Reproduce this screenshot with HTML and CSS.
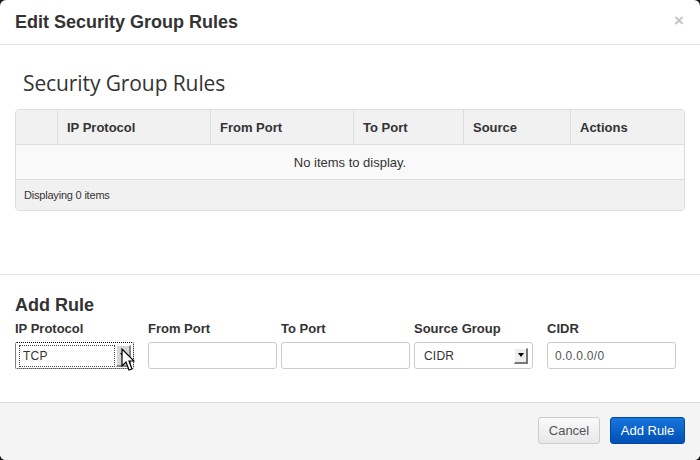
FILE: index.html
```html
<!DOCTYPE html>
<html>
<head>
<meta charset="utf-8">
<link rel="stylesheet" href="styles.css">
</head>
<body>
<div class="modal">
  <div class="modal-header">
    <h2 class="modal-title">Edit Security Group Rules</h2>
    <span class="close">×</span>
  </div>
  <div class="modal-body">
    <h3 class="section-title">Security Group Rules</h3>
    <div class="table-wrap">
      <table class="rules">
        <thead>
          <tr>
            <th class="c0"></th>
            <th class="c1">IP Protocol</th>
            <th class="c2">From Port</th>
            <th class="c3">To Port</th>
            <th class="c4">Source</th>
            <th class="c5">Actions</th>
          </tr>
        </thead>
        <tbody>
          <tr class="empty"><td colspan="6">No items to display.</td></tr>
        </tbody>
        <tfoot>
          <tr><td colspan="6">Displaying 0 items</td></tr>
        </tfoot>
      </table>
    </div>
  </div>
  <div class="add-rule">
    <h3 class="add-title">Add Rule</h3>
    <div class="fields">
      <div class="field">
        <label>IP Protocol</label>
        <div class="select focused">
          <span class="sel-text">TCP</span>
          <span class="sel-btn dark"><span class="tri"></span></span>
        </div>
      </div>
      <div class="field">
        <label>From Port</label>
        <div class="input"></div>
      </div>
      <div class="field">
        <label>To Port</label>
        <div class="input"></div>
      </div>
      <div class="field">
        <label>Source Group</label>
        <div class="select plain">
          <span class="sel-text">CIDR</span>
          <span class="sel-btn"><span class="tri"></span></span>
        </div>
      </div>
      <div class="field">
        <label>CIDR</label>
        <div class="input"><span class="val">0.0.0.0/0</span></div>
      </div>
    </div>
    <svg class="cursor" width="14" height="24" viewBox="0 0 14 24">
      <path d="M1 1 L1 18 L5 14 L8 22 L11 21 L8 13 L13 13 Z" fill="#fff" stroke="#000" stroke-width="1.2" stroke-linejoin="miter"/>
    </svg>
  </div>
  <div class="modal-footer">
    <button class="btn btn-cancel">Cancel</button>
    <button class="btn btn-primary">Add Rule</button>
  </div>
</div>
</body>
</html>
```
FILE: styles.css
```css
html, body {
  margin: 0;
  padding: 0;
  background: #1a1a1a;
}
body {
  font-family: "Liberation Sans", Arial, sans-serif;
  color: #333;
  font-size: 13px;
}
.modal {
  width: 700px;
  height: 460px;
  background: #fff;
  border-radius: 6px;
  overflow: hidden;
  display: flex;
  flex-direction: column;
  position: relative;
}
.modal-header {
  height: 45px;
  box-sizing: border-box;
  border-bottom: 1px solid #e5e5e5;
  display: flex;
  align-items: center;
  justify-content: space-between;
  padding: 0 15px 0 15px;
}
.modal-title {
  margin: 0;
  font-size: 18px;
  font-weight: bold;
  color: #333;
  line-height: 20px;
}
.close {
  color: #c4c4c4;
  font-size: 17px;
  font-weight: bold;
  margin-right: 1px;
  margin-top: -2px;
}
.modal-body {
  padding: 0 15px;
  height: 230px;
  box-sizing: border-box;
  border-bottom: 1px solid #e5e5e5;
}
.section-title {
  font-family: "Open Sans", sans-serif;
  font-weight: normal;
  font-size: 21px;
  color: #333;
  margin: 0;
  padding: 24px 0 0 8px;
  height: 40px;
  line-height: 28px;
  letter-spacing: -0.1px;
}
.table-wrap {
  border: 1px solid #ddd;
  border-radius: 4px;
  overflow: hidden;
}
.rules {
  width: 100%;
  border-collapse: collapse;
  table-layout: fixed;
}
.rules th {
  background: #f1f1f1;
  height: 34px;
  padding: 0 9px;
  text-align: left;
  font-size: 13px;
  font-weight: bold;
  border-left: 1px solid #ddd;
  border-bottom: 1px solid #ddd;
}
.rules th.c0 { border-left: none; width: 23px; }
.rules th.c1 { width: 134px; }
.rules th.c2 { width: 124px; }
.rules th.c3 { width: 91px; }
.rules th.c4 { width: 88px; }
.rules .empty td {
  background: #f9f9f9;
  height: 34px;
  text-align: center;
  font-size: 13px;
  border-bottom: 1px solid #ddd;
  padding: 0;
}
.rules tfoot td {
  background: #f1f1f1;
  height: 30px;
  padding: 0 8px;
  font-size: 11px;
  letter-spacing: -0.2px;
}
.add-rule {
  padding: 19px 15px 0 15px;
  flex: 1;
  position: relative;
}
.add-title {
  margin: 0;
  font-size: 18px;
  font-weight: bold;
  line-height: 22px;
  color: #333;
}
.fields {
  display: flex;
  gap: 4px;
  margin-top: 5px;
}
.field {
  width: 129px;
  display: flex;
  flex-direction: column;
}
.field label {
  font-weight: bold;
  font-size: 13px;
  line-height: 16px;
  margin-bottom: 5px;
  color: #333;
}
.input {
  height: 27px;
  box-sizing: border-box;
  border: 1px solid #ccc;
  border-radius: 3px;
  background: #fff;
  display: flex;
  align-items: center;
  padding-left: 7px;
}
.val {
  font-size: 12px;
  color: #555;
  letter-spacing: 0.3px;
}
.select {
  height: 27px;
  width: 119px;
  box-sizing: border-box;
  display: flex;
  align-items: center;
  position: relative;
  background: #fff;
}
.select.plain {
  border: 1px solid #ccc;
  border-radius: 3px;
  padding-left: 9px;
}
.select.focused {
  border: 1px dotted #000;
  border-radius: 2px;
  padding-left: 4px;
}
.sel-text {
  font-size: 12px;
  color: #333;
  flex: 1;
  letter-spacing: 0.2px;
}
.select.focused .sel-text {
  outline: 1px dotted #444;
  height: 20px;
  line-height: 20px;
  padding-left: 3px;
  margin-right: 2px;
}
.sel-btn {
  width: 14px;
  height: 16px;
  box-sizing: border-box;
  background: #eee;
  border-right: 2px solid #777;
  border-bottom: 2px solid #777;
  border-top: 1px solid #fff;
  border-left: 1px solid #fff;
  display: flex;
  align-items: center;
  justify-content: center;
  margin-right: 4px;
}
.sel-btn.dark {
  height: 22px;
  width: 15px;
  background: #d6d6d6;
  border-right: 2px solid #888;
  border-bottom: 2px solid #888;
  margin-right: 2px;
}
.tri {
  width: 0;
  height: 0;
  border-left: 3px solid transparent;
  border-right: 3px solid transparent;
  border-top: 4px solid #000;
}
.cursor {
  position: absolute;
  left: 121px;
  top: 73px;
}
.modal-footer {
  height: 58px;
  box-sizing: border-box;
  border-top: 1px solid #ddd;
  background: #f4f4f4;
  display: flex;
  justify-content: flex-end;
  align-items: flex-start;
  gap: 10px;
  padding: 14px 15px 0 0;
}
.btn {
  height: 27px;
  font-family: "Liberation Sans", Arial, sans-serif;
  font-size: 13px;
  border-radius: 3px;
  padding: 0;
  white-space: nowrap;
  cursor: default;
}
.btn-cancel {
  width: 62px;
  color: #555;
  background: linear-gradient(#fafafa, #e8e8e8);
  border: 1px solid #ccc;
}
.btn-primary {
  width: 75px;
  color: #fff;
  background: linear-gradient(#1775dc, #0050b5);
  border: 1px solid #0048a8;
}
```
